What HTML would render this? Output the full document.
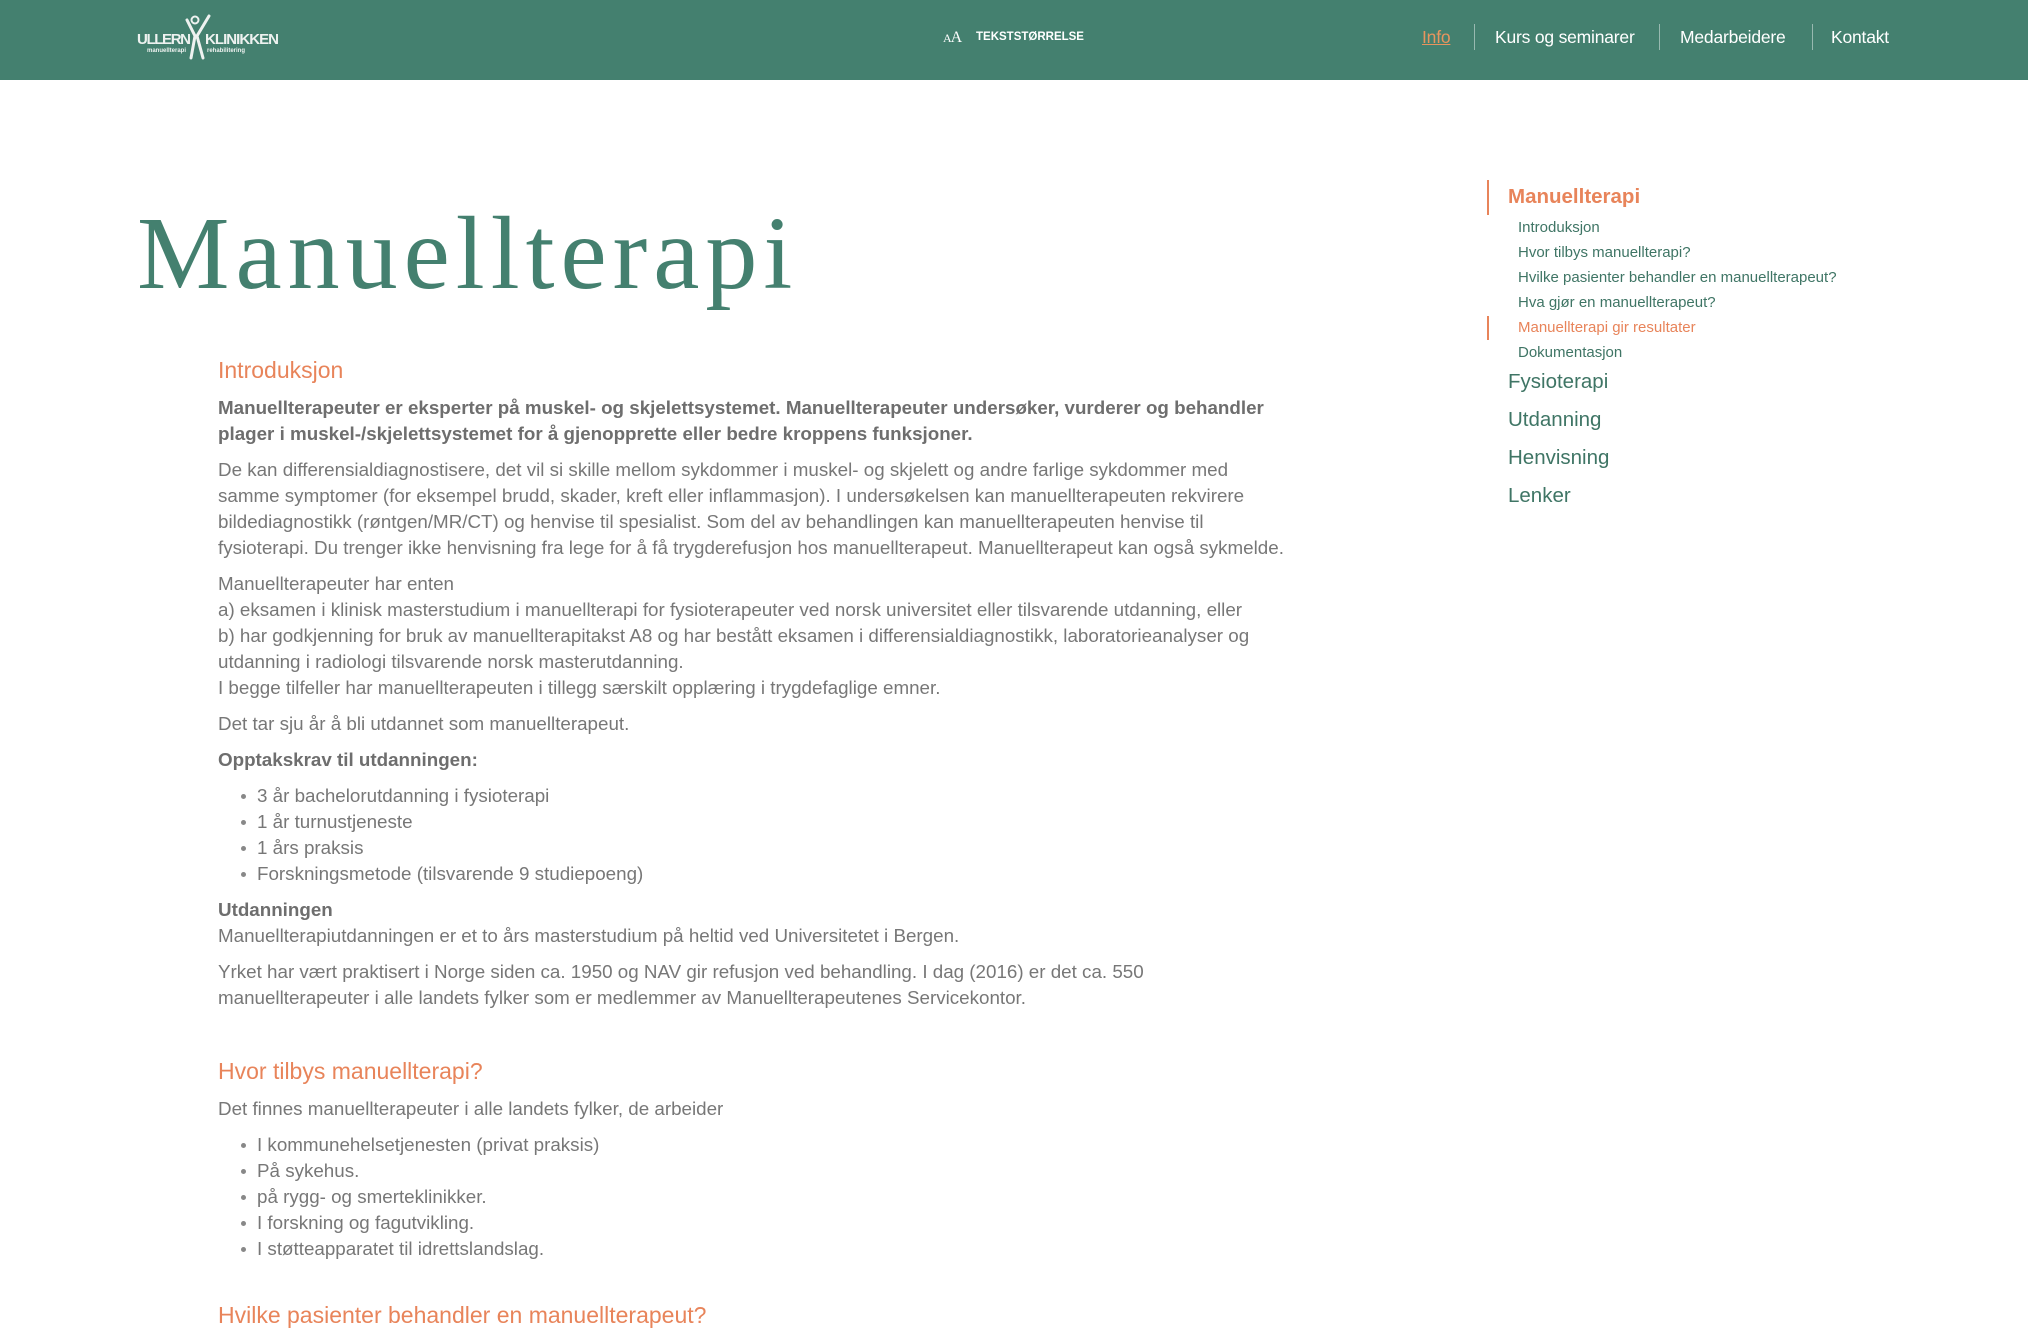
<!DOCTYPE html>
<html><head><meta charset="utf-8"><style>
*{margin:0;padding:0;box-sizing:border-box}
body{width:2028px;height:1321px;overflow:hidden;background:#fff;font-family:"Liberation Sans",Arial,sans-serif;position:relative}
.hdr{position:absolute;left:0;top:0;width:2028px;height:80px;background:#44806f}
.logo{position:absolute;left:137px;top:14px;color:#eef2f0}
.nav{position:absolute;top:27px;font-size:17.5px;color:#fff;letter-spacing:-0.2px}
.sep{position:absolute;top:24px;width:1px;height:26px;background:rgba(255,255,255,.45)}
h1{position:absolute;left:137px;top:202px;font-family:"Liberation Serif",serif;font-weight:normal;font-size:104px;color:#44806f;letter-spacing:6px;line-height:1}
.content{position:absolute;left:218px;top:355px;width:1250px;font-size:18.8px;line-height:26px;color:#777}
.content h2{font-weight:normal;font-size:23px;color:#e8845a;line-height:30px;margin-bottom:10px}
.content p{margin-bottom:10px}
.content b{color:#6e6e6e}
.content ul{list-style:none;margin-bottom:10px}
.content li{padding-left:39px;position:relative}
.content li:before{content:"";position:absolute;left:23px;top:11px;width:5px;height:5px;border-radius:50%;background:#888}
.side{position:absolute;left:1487px;top:180px;font-size:15px;color:#3f7565}
.side .bar{position:absolute;left:0;width:2px;background:#e8845a}
.side div.t{position:absolute;white-space:nowrap}
</style></head><body>
<div class="hdr">
 <div class="logo">
  <svg width="145" height="50" viewBox="0 0 145 50">
   <text x="0" y="30" font-family="Liberation Sans" font-weight="bold" font-size="15" fill="#eef2f0" textLength="54">ULLERN</text>
   <text x="68" y="30" font-family="Liberation Sans" font-weight="bold" font-size="15" fill="#eef2f0" textLength="74">KLINIKKEN</text>
   <text x="10" y="38" font-family="Liberation Sans" font-weight="bold" font-size="6" fill="#eef2f0">manuellterapi</text>
   <text x="70" y="38" font-family="Liberation Sans" font-weight="bold" font-size="6" fill="#eef2f0">rehabilitering</text>
   <circle cx="58" cy="6" r="3.5" fill="none" stroke="#eef2f0" stroke-width="2"/>
   <path d="M50 6 L58 22 L54 44 M72 2 L60 22 L66 44" fill="none" stroke="#eef2f0" stroke-width="3" stroke-linecap="round"/>
  </svg>
 </div>
 <div style="position:absolute;left:943px;top:29px;color:#fff;font-family:'Liberation Serif',serif;font-size:16px;letter-spacing:-1px"><span style="font-size:12px">A</span>A</div>
 <div style="position:absolute;left:976px;top:31px;color:#fff;font-weight:bold;font-size:11.5px">TEKSTSTØRRELSE</div>
 <div class="nav" style="left:1422px;color:#e8945e;text-decoration:underline">Info</div>
 <div class="sep" style="left:1474px"></div>
 <div class="nav" style="left:1495px">Kurs og seminarer</div>
 <div class="sep" style="left:1659px"></div>
 <div class="nav" style="left:1680px">Medarbeidere</div>
 <div class="sep" style="left:1812px"></div>
 <div class="nav" style="left:1831px">Kontakt</div>
</div>

<h1>Manuellterapi</h1>

<div class="content">
<h2>Introduksjon</h2>
<p><b>Manuellterapeuter er eksperter på muskel- og skjelettsystemet. Manuellterapeuter undersøker, vurderer og behandler<br>plager i muskel-/skjelettsystemet for å gjenopprette eller bedre kroppens funksjoner.</b></p>
<p>De kan differensialdiagnostisere, det vil si skille mellom sykdommer i muskel- og skjelett og andre farlige sykdommer med<br>samme symptomer (for eksempel brudd, skader, kreft eller inflammasjon). I undersøkelsen kan manuellterapeuten rekvirere<br>bildediagnostikk (røntgen/MR/CT) og henvise til spesialist. Som del av behandlingen kan manuellterapeuten henvise til<br>fysioterapi. Du trenger ikke henvisning fra lege for å få trygderefusjon hos manuellterapeut. Manuellterapeut kan også sykmelde.</p>
<p>Manuellterapeuter har enten<br>a) eksamen i klinisk masterstudium i manuellterapi for fysioterapeuter ved norsk universitet eller tilsvarende utdanning, eller<br>b) har godkjenning for bruk av manuellterapitakst A8 og har bestått eksamen i differensialdiagnostikk, laboratorieanalyser og<br>utdanning i radiologi tilsvarende norsk masterutdanning.<br>I begge tilfeller har manuellterapeuten i tillegg særskilt opplæring i trygdefaglige emner.</p>
<p>Det tar sju år å bli utdannet som manuellterapeut.</p>
<p><b>Opptakskrav til utdanningen:</b></p>
<ul><li>3 år bachelorutdanning i fysioterapi</li><li>1 år turnustjeneste</li><li>1 års praksis</li><li>Forskningsmetode (tilsvarende 9 studiepoeng)</li></ul>
<p><b>Utdanningen</b><br>Manuellterapiutdanningen er et to års masterstudium på heltid ved Universitetet i Bergen.</p>
<p style="margin-bottom:45px">Yrket har vært praktisert i Norge siden ca. 1950 og NAV gir refusjon ved behandling. I dag (2016) er det ca. 550<br>manuellterapeuter i alle landets fylker som er medlemmer av Manuellterapeutenes Servicekontor.</p>
<h2>Hvor tilbys manuellterapi?</h2>
<p>Det finnes manuellterapeuter i alle landets fylker, de arbeider</p>
<ul style="margin-bottom:38px"><li>I kommunehelsetjenesten (privat praksis)</li><li>På sykehus.</li><li>på rygg- og smerteklinikker.</li><li>I forskning og fagutvikling.</li><li>I støtteapparatet til idrettslandslag.</li></ul>
<h2>Hvilke pasienter behandler en manuellterapeut?</h2>
</div>

<div class="side">
 <div class="bar" style="top:0;height:35px"></div>
 <div class="t" style="left:21px;top:5px;font-size:20.5px;font-weight:bold;color:#e8845a">Manuellterapi</div>
 <div class="t" style="left:31px;top:39px">Introduksjon</div>
 <div class="t" style="left:31px;top:64px">Hvor tilbys manuellterapi?</div>
 <div class="t" style="left:31px;top:89px">Hvilke pasienter behandler en manuellterapeut?</div>
 <div class="t" style="left:31px;top:114px">Hva gjør en manuellterapeut?</div>
 <div class="bar" style="top:136px;height:24px"></div>
 <div class="t" style="left:31px;top:139px;color:#e8845a">Manuellterapi gir resultater</div>
 <div class="t" style="left:31px;top:164px">Dokumentasjon</div>
 <div class="t" style="left:21px;top:190px;font-size:20.5px">Fysioterapi</div>
 <div class="t" style="left:21px;top:228px;font-size:20.5px">Utdanning</div>
 <div class="t" style="left:21px;top:266px;font-size:20.5px">Henvisning</div>
 <div class="t" style="left:21px;top:304px;font-size:20.5px">Lenker</div>
</div>
</body></html>
